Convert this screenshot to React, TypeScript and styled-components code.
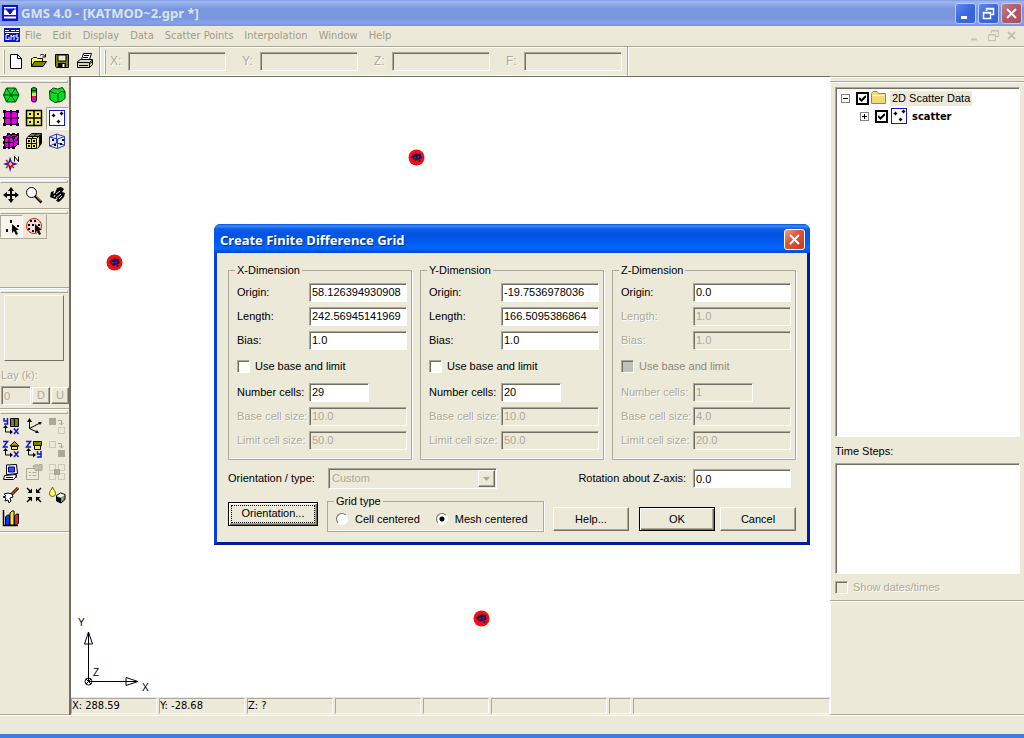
import React from "react";
import styled, { createGlobalStyle, css } from "styled-components";

const face = "#ece9d8";
const shade = "#aca899";
const dark = "#716f64";
const muted = "#aca899";
const sans = `"MS Sans Serif", "Liberation Sans", sans-serif`;
const tahoma = `Tahoma, "DejaVu Sans Condensed", "DejaVu Sans", sans-serif`;

const GlobalStyle = createGlobalStyle`
  *, *::before { box-sizing: border-box; }
  body { margin: 0; background: ${face}; font: 11px/13px ${sans}; color: #000; }
  button, input, select { font: inherit; color: inherit; margin: 0; }
  svg { display: block; flex: none; }
`;

const sunken = css`
  border: 1px solid;
  border-color: ${shade} #fff #fff ${shade};
  box-shadow: inset 1px 1px 0 ${dark};
`;
const raised = css`
  border: 1px solid;
  border-color: #fff ${dark} ${dark} #fff;
  box-shadow: inset -1px -1px 0 ${shade};
`;

const Window = styled.div`
  position: relative;
  display: flex;
  flex-direction: column;
  min-height: 100vh;
`;

/* ---------- title bar ---------- */
const TitleBar = styled.header`
  display: flex;
  align-items: center;
  height: 26px;
  padding: 0 2px;
  gap: 3px;
  background: linear-gradient(#7d9be6 0, #a3b9ee 2px, #8ca6e6 5px, #7a96df 9px, #7a96df 18px, #86a3ea 23px, #7a93dc 100%);
`;
const AppTitle = styled.h1`
  flex: 1;
  margin: 0;
  font: bold 13px/16px "Noto Sans", sans-serif;
  color: #d8e4f8;
`;
const CaptionButton = styled.button<{ $tone: "blue" | "dim" | "red" }>`
  width: 21px;
  height: 21px;
  padding: 0;
  margin-left: ${(p) => (p.$tone === "red" ? 0 : -1)}px;
  display: grid;
  place-items: center;
  border: 1px solid ${(p) => (p.$tone === "red" ? "#fff" : "#b9cbf6")};
  border-radius: 3px;
  background: ${(p) =>
    p.$tone === "red"
      ? "linear-gradient(135deg, #f0a088, #e0573a 40%, #c83a1c)"
      : p.$tone === "dim"
        ? "linear-gradient(135deg, #c07c90, #b05a68 50%, #a85060)"
        : "linear-gradient(135deg, #5f8af0, #3a68e0 50%, #3a60d4)"};
`;

/* ---------- menu bar ---------- */
const MenuBar = styled.nav`
  display: flex;
  align-items: center;
  height: 20px;
  padding: 0 4px 2px;
  gap: 11px;
  font-family: ${tahoma};
`;
const MenuLink = styled.a`
  color: #a09c8c;
  text-decoration: none;
`;
const MenuMark = styled.span`
  margin-right: -6px;
`;
const MdiButtons = styled.div`
  display: flex;
  margin-left: auto;
`;
const MdiButton = styled.button`
  width: 18px;
  height: 16px;
  padding: 0;
  border: 0;
  background: none;
  display: grid;
  place-items: center;
`;

/* ---------- toolbar ---------- */
const ToolBar = styled.div`
  display: flex;
  align-items: center;
  height: 30px;
  border-top: 1px solid ${shade};
  box-shadow: inset 0 1px 0 #fff;
`;
const BarGroup = styled.div<{ $wide?: boolean }>`
  display: flex;
  align-items: center;
  align-self: stretch;
  gap: ${(p) => (p.$wide ? 4 : 0)}px;
  padding: ${(p) => (p.$wide ? "0 5px" : "0 2px 0 4px")};
  border-right: 1px solid ${shade};
  box-shadow: 1px 0 0 #fff, inset 0 -1px 0 #fff;
`;
const Coords = styled.div`
  display: flex;
  gap: 16px;
`;
const Grip = styled.span`
  width: 1px;
  height: 24px;
  background: ${shade};
  box-shadow: -1px 0 0 #fff;
`;
const IconButton = styled.button<{ $pressed?: boolean }>`
  width: 23px;
  height: 23px;
  padding: 0 1px 1px 0;
  display: grid;
  place-items: center;
  background: ${(p) => (p.$pressed ? "#f6f4ec" : "none")};
  border: 1px solid;
  border-color: ${(p) => (p.$pressed ? `${shade} #fff #fff ${shade}` : "transparent")};
`;
const CoordField = styled.label`
  display: flex;
  align-items: center;
  color: ${muted};
  font-size: 12px;
  span { width: 18px; text-shadow: 1px 1px 0 #fff; }
`;

const TextBox = styled.input<{ $w: number }>`
  width: ${(p) => p.$w}px;
  height: 19px;
  padding: 0 2px;
  border-radius: 0;
  background: #fff;
  outline: 0;
  ${sunken}
  &:disabled { background: ${face}; color: ${muted}; }
`;

/* ---------- body ---------- */
const Main = styled.div`
  display: flex;
  flex: 1;
`;
const SideTools = styled.aside`
  width: 69px;
  display: flex;
  flex-direction: column;
  padding-top: 2px;
  border-top: 1px solid ${shade};
  border-bottom: 1px solid ${shade};
  background: ${face};
`;
const ToolGroup = styled.section<{ $tall?: boolean }>`
  padding: 4px 0 1px;
  border-bottom: 1px solid ${shade};
  box-shadow: 0 1px 0 #fff;
  min-height: ${(p) => (p.$tall ? 78 : 0)}px;
  margin-bottom: 1px;
  &::before {
    content: "";
    display: block;
    height: 3px;
    margin: -3px 1px 1px 0;
    border: 1px solid;
    border-color: #fff ${shade} ${shade} #fff;
  }
`;
const IconGrid = styled.div`
  display: grid;
  grid-template-columns: repeat(3, 23px);
`;
const ModePair = styled.div`
  display: flex;
  width: 47px;
  border-right: 1px solid ${shade};
  border-bottom: 1px solid ${shade};
`;
const Preview = styled.div`
  height: 66px;
  margin: 2px 5px 0 4px;
  border: 1px solid;
  border-color: #fff ${dark} ${dark} #fff;
`;
const LayLabel = styled.label`
  display: block;
  margin-top: 8px;
  padding-left: 1px;
  color: ${muted};
  text-shadow: 1px 1px 0 #fff;
`;
const LayRow = styled.div`
  display: flex;
  align-items: center;
  gap: 1px;
  padding: 4px 0 2px 1px;
`;
const MiniButton = styled.button`
  width: 18px;
  height: 17px;
  padding: 0;
  color: ${muted};
  background: ${face};
  ${raised}
`;

const Center = styled.main`
  flex: 1;
  min-width: 0;
  display: flex;
  flex-direction: column;
  border: solid ${dark};
  border-width: 1px 0 0 2px;
`;
const Canvas = styled.div`
  position: relative;
  flex: 1;
  background: #fff;
`;
const Pin = styled.span<{ $x: number; $y: number }>`
  position: absolute;
  left: ${(p) => p.$x}px;
  top: ${(p) => p.$y}px;
`;
const Axes = styled.div`
  position: absolute;
  left: 5px;
  bottom: 0;
`;
const StatusBar = styled.footer`
  display: flex;
  gap: 2px;
  height: 18px;
  padding: 1px 0;
  background: ${face};
  font-family: ${tahoma};
`;
const StatusCell = styled.span<{ $w?: number }>`
  ${(p) => (p.$w ? `width: ${p.$w}px;` : "flex: 1;")}
  line-height: 14px;
  border: 1px solid;
  border-color: ${shade} #fff #fff ${shade};
  white-space: nowrap;
`;

const Explorer = styled.aside`
  width: 194px;
  display: flex;
  flex-direction: column;
  border: solid ${shade};
  border-width: 1px 0;
  box-shadow: inset 1px 1px 0 #fff;
`;
const ExplorerBar = styled.div`
  height: 5px;
  border-bottom: 1px solid ${shade};
  box-shadow: 0 1px 0 #fff;
`;
const ExplorerBody = styled.div`
  padding: 5px 4px 6px 5px;
  border-bottom: 1px solid ${shade};
  box-shadow: 0 1px 0 #fff;
`;
const Well = styled.div<{ $h: number }>`
  height: ${(p) => p.$h}px;
  background: #fff;
  ${sunken}
`;
const Tree = styled.ul`
  margin: 0;
  padding: 1px 0 0 5px;
  list-style: none;
  ul { margin: 0; padding-left: 19px; list-style: none; }
`;
const TreeRow = styled.label<{ $bold?: boolean; $lit?: boolean }>`
  display: flex;
  align-items: center;
  height: 18px;
  gap: 2px;
  font-weight: ${(p) => (p.$bold ? "bold" : "normal")};
  font-family: ${(p) => (p.$bold ? `"DejaVu Sans Condensed", sans-serif` : sans)};
  b, span { padding: 1px 2px; margin-left: ${(p) => (p.$lit ? 1 : 0)}px; background: ${(p) => (p.$lit ? face : "none")}; }
`;
const Check = styled.input<{ $heavy?: boolean }>`
  appearance: none;
  display: block;
  flex: none;
  width: 13px;
  height: 13px;
  background: #fff;
  border-radius: 0;
  ${(p) => (p.$heavy ? "border: 2px solid #000;" : sunken)}
  &:disabled { background: ${face}; }
`;
const TickBox = styled.span`
  && { position: relative; display: block; padding: 0; margin: 0 0 0 4px; background: none; }
  svg { position: absolute; left: 3px; top: 3px; pointer-events: none; }
`;
const WellTitle = styled.label`
  display: block;
  padding: 8px 0 5px;
`;
const ShowDates = styled.label`
  display: flex;
  align-items: center;
  gap: 5px;
  margin-top: 7px;
  color: ${muted};
  text-shadow: 1px 1px 0 #fff;
`;
const BottomStrip = styled.div`
  height: 23px;
  border-bottom: 4px solid #3b7de2;
  box-shadow: inset 0 1px 0 #fff;
`;

/* ---------- dialog ---------- */
const DialogLayer = styled.div`
  position: absolute;
  top: 224px;
  left: 0;
  right: 0;
  display: flex;
  justify-content: center;
`;
const Dialog = styled.section`
  width: 596px;
  border-radius: 7px 7px 0 0;
  border: 3px solid #0a3fd4;
  border-color: #0a50e0 #001c9c #001c9c #0a3fd4;
  border-top: 0;
  background: ${face};
`;
const DialogTitle = styled.header`
  display: flex;
  align-items: center;
  justify-content: space-between;
  height: 29px;
  margin: 0 -3px;
  padding: 2px 5px 0 6px;
  border-radius: 6px 6px 0 0;
  background: linear-gradient(#0a50d0 0, #3c8cf8 2px, #0a5ce8 5px, #0054e3 10px, #005cf0 18px, #0066ff 24px, #0048d0 100%);
  h2 {
    margin: 0;
    font: bold 13px/16px "Noto Sans", sans-serif;
    color: #fff;
    text-shadow: 1px 1px 0 #0a2a80;
  }
`;
const DialogBody = styled.form`
  padding: 11px 11px 10px;
`;
const Columns = styled.div`
  display: grid;
  grid-template-columns: repeat(3, 1fr);
  gap: 8px;
`;
const GroupBox = styled.fieldset`
  min-width: 0;
  margin: 0;
  padding: 3px 4px 7px 8px;
  border: 1px solid ${shade};
  box-shadow: inset 0 -1px 0 #fff, 1px 0 0 #fff;
  legend { margin-left: -2px; padding: 0 2px; line-height: 13px; }
`;
const FieldRow = styled.div<{ $off?: boolean }>`
  display: flex;
  align-items: center;
  height: 24px;
  color: ${(p) => (p.$off ? muted : "#000")};
  text-shadow: ${(p) => (p.$off ? "1px 1px 0 #fff" : "none")};
  label { width: 72px; white-space: nowrap; }
`;
const CheckRow = styled.label<{ $off?: boolean }>`
  display: flex;
  align-items: center;
  height: 28px;
  gap: 5px;
  color: ${(p) => (p.$off ? "#8c8978" : "#000")};
  input:disabled { background: #c0c0c0; }
`;
const OrientRow = styled.div`
  display: flex;
  align-items: center;
  height: 25px;
  margin-top: 6px;
  padding-right: 5px;
`;
const OrientLabel = styled.label`
  width: 100px;
`;
const RotationLabel = styled.label`
  margin: 0 7px 0 auto;
`;
const SelectWrap = styled.div`
  position: relative;
  width: 169px;
  height: 21px;
  color: ${muted};
  ${sunken}
  select {
    appearance: none;
    width: 100%;
    height: 100%;
    padding: 0 3px;
    border: 0;
    background: transparent;
    opacity: 1;
  }
`;
const Arrow = styled.span`
  position: absolute;
  right: 1px;
  top: 1px;
  width: 17px;
  height: 17px;
  display: grid;
  place-items: center;
  background: ${face};
  pointer-events: none;
  ${raised}
`;
const ActionRow = styled.div`
  display: flex;
  align-items: flex-end;
  justify-content: space-between;
  margin-top: 4px;
`;
const PushButton = styled.button<{ $default?: boolean; $w: number }>`
  width: ${(p) => p.$w}px;
  height: 24px;
  padding: 0;
  background: ${face};
  ${raised}
  ${(p) =>
    p.$default &&
    css`
      border-color: #000;
      box-shadow: inset 1px 1px 0 #fff, inset -1px -1px 0 ${dark}, inset -2px -2px 0 ${shade};
    `}
`;
const FocusRing = styled.span`
  display: block;
  margin: 0 2px;
  padding: 1px 0 2px;
  border: 1px dotted #000;
`;
const Lifted = styled.div`
  margin-bottom: 6px;
`;
const GridType = styled(GroupBox)`
  display: flex;
  gap: 16px;
  width: 217px;
  height: 37px;
  padding: 1px 8px 0;
  label { display: flex; align-items: center; gap: 7px; height: 20px; white-space: nowrap; }
`;
const Radio = styled.input`
  appearance: none;
  width: 12px;
  height: 12px;
  border-radius: 50%;
  border: 1px solid;
  border-color: ${dark} #fff #fff ${dark};
  background: #fff;
  &:checked { background: radial-gradient(circle, #000 0 2px, #fff 3px); }
`;
const Buttons = styled.div`
  display: flex;
  padding-bottom: 1px;
  gap: 5px;
  > :first-child { margin-right: 5px; }
`;

/* ---------- icons ---------- */
const Ico = ({ children, w = 18, h = 18 }: { children: React.ReactNode; w?: number; h?: number }) => (
  <svg width={w} height={h} viewBox={`0 0 ${w} ${h}`} fill="none" aria-hidden="true">{children}</svg>
);

const AppMark = () => (
  <Ico w={16} h={16}>
    <rect width="16" height="16" fill="#0a14c8" />
    <path d="M2 2h12v9H2z" fill="#fff" />
    <path d="M2 4h3M11 4h3M4 4h8l-4 5z" fill="#0a14c8" stroke="#0a14c8" />
    <path d="M2 12.500h12" stroke="#fff" strokeWidth="2" />
    <path d="M2 10.500h12" stroke="#0a14c8" />
  </Ico>
);
const DocMark = () => (
  <Ico w={16} h={14}>
    <rect width="16" height="14" fill="#0a14c8" />
    <path d="M1 2.500h4M7 2.500h4M12 2.500h3M1 4.500h14M2 7v5M2 6.500h3M2 11.500h3M5 9v3M7 12V7l1.500 2L10 7v5M14 7h-2v2h2v3h-2" stroke="#fff" />
  </Ico>
);
const NewIcon = () => (
  <Ico><path d="M3.500 2.500h7l4 4v10h-11z" fill="#fff" stroke="#000" /><path d="M10.500 2.500v4h4" stroke="#000" /></Ico>
);
const OpenIcon = () => (
  <Ico>
    <path d="M1.500 14.500v-8h1l1-1h3l1 1h5v3" fill="#ffff60" stroke="#000" />
    <path d="M1.500 14.500l3-5h12l-3.500 5z" fill="#808000" stroke="#000" />
    <path d="M10 3.500c2-2 4-1 5 1M15.500 2v3h-3" stroke="#000" />
  </Ico>
);
const SaveIcon = () => (
  <Ico>
    <path d="M2.500 2.500h13v13h-12l-1-1z" fill="#808000" stroke="#000" />
    <path d="M5 3h8v6H5z" fill="#ece9d8" stroke="#000" />
    <path d="M5 11h8v5H5z" fill="#000" /><path d="M10.500 12v3" stroke="#fff" strokeWidth="2" />
  </Ico>
);
const PrintIcon = () => (
  <Ico>
    <path d="M5.500 7.500l2-6h8l-2 6" fill="#fff" stroke="#000" />
    <path d="M8 3.500h5M7 5.500h5" stroke="#000" />
    <path d="M1.500 9.500l3-2h12v5l-3 3h-12z" fill="#d8d5c4" stroke="#000" />
    <path d="M1.500 10.500h12v5M14 10l2.500-2M3 13.500h9M13 12l3-2" stroke="#000" />
    <path d="M9 12h2" stroke="#e8e000" />
  </Ico>
);
const TinIcon = () => (
  <Ico>
    <path d="M1.500 9l3-7h9l3.500 7-3.500 7h-9z" fill="#00e020" stroke="#043c08" />
    <path d="M1.500 9h15.500M4.500 2l9 14M13.500 2l-9 14" stroke="#043c08" />
  </Ico>
);
const BoreIcon = () => (
  <Ico>
    <path d="M6.500 2.500c0-1 5-1 5 0v12c0 2-5 2-5 0z" fill="#00d020" stroke="#000" />
    <path d="M7 7h4v3H7z" fill="#ffe820" /><path d="M7 10h4v2H7z" fill="#e02020" /><path d="M7 12h4v3H7z" fill="#e000e0" />
    <path d="M7 4c1 1 3 1 4 0" stroke="#000" />
  </Ico>
);
const SolidIcon = () => (
  <Ico>
    <path d="M1.500 5l4-3 4 1 5-1.500 2.500 4v7l-4 3-6 1-5-3z" fill="#00e020" stroke="#043c08" />
    <path d="M1.500 5l4 2 4.500 1 3-2.500 4 .500M10 8v8" stroke="#043c08" />
  </Ico>
);
const MeshIcon = ({ solid }: { solid?: boolean }) => (
  <Ico>
    {solid && <path d="M2.500 5.500l4-3h10v9l-4 4z" fill="#e000e0" stroke="#000" />}
    <path d={solid ? "M2.500 5.500h9v10h-9zM7 5v10M2 10.500h10M7 5l4-3M11.500 5.500l5-3M12 10l4-3" : "M2.500 2.500h13v13h-13zM9 2v14M2 9h14"} fill="#e000e0" stroke="#000" />
    <path
      d={solid ? "M1 4h3v3H1zM10 4h3v3h-3zM1 9h2v3H1zM1 14h3v3H1zM6 14h2v3H6zM10 14h3v3h-3zM5 1h3v2H5zM10 1h3v2h-3zM15 1h2v3h-2zM15 6h2v3h-2zM15 11h2v2h-2z" : "M1 1h3v3H1zM8 1h2v3H8zM14 1h3v3h-3zM1 8h3v2H1zM8 8h2v2H8zM14 8h3v2h-3zM1 14h3v3H1zM8 14h2v3H8zM14 14h3v3h-3z"}
      fill="#200020"
    />
  </Ico>
);
const GridIcon = ({ solid }: { solid?: boolean }) => (
  <Ico>
    {solid && <path d="M1.500 6l5-4.500h10v10l-4 5M3.500 4.500h11v10M5 3h10.500v10M7 6l5-4.500M12 6l4.500-4" fill="#f4ec50" stroke="#000" />}
    <path d={solid ? "M1.500 6.500h10v10h-10zM6.500 6v11M1 11.500h11" : "M1.500 1.500h15v15h-15zM9 1v16M1 9h16"} fill="#f4ec50" stroke="#000" strokeWidth={solid ? 1 : 1.5} />
    <path d={solid ? "M3 8h2v2H3zM8 8h2v2H8zM3 13h2v2H3zM8 13h2v2H8z" : "M4 4h2v2H4zM12 4h2v2h-2zM4 12h2v2H4zM12 12h2v2h-2z"} fill="#000" />
  </Ico>
);
const ScatterIcon = () => (
  <Ico>
    <rect x="1.500" y="1.500" width="15" height="15" fill="#fff" stroke="#1414c8" />
    <path d="M5 5h1v3H5zM4 6h3v1H4zM13 3h1v3h-1zM12 4h3v1h-3zM10 11h1v3h-1zM9 12h3v1H9z" fill="#000" stroke="#000" strokeWidth="0.500" />
  </Ico>
);
const Scatter3Icon = () => (
  <Ico>
    <path d="M1.500 5l7-3 8 2.500v9l-7 3-8-2.500zM1.500 5l8 2v9.500M9.500 7l7-2.500M8.500 2v9l-7 3M8.500 11l8 2" fill="#e4e8fc" stroke="#3038c8" />
    <path d="M4 7h2v2H4zM14 7h2v2h-2zM6 12h2v2H6zM12 11h2v2h-2z" fill="#000" />
  </Ico>
);
const MapIcon = () => (
  <Ico>
    <path d="M8 1.500l2 5.500 6 2-6 2-2 6-1.500-6L1 9l5.500-2z" fill="#2020c8" />
    <path d="M4 5l2 2M4 13l2-2M12 13l-2-2" stroke="#d01818" strokeWidth="1.500" />
    <path d="M8.500 6.500l2.500 2.500-2.500 2.500L6 9z" fill="#ffb060" stroke="#d01818" />
    <path d="M12.500 6.500v-5l4 5v-5" stroke="#000" />
  </Ico>
);
const PanIcon = () => (
  <Ico>
    <path d="M9 3v12M3 9h12" stroke="#000" strokeWidth="2" />
    <path d="M9 1l3 4H6zM9 17l3-4H6zM1 9l4-3v6zM17 9l-4-3v6z" fill="#000" />
  </Ico>
);
const ZoomIcon = () => (
  <Ico>
    <circle cx="6.500" cy="6.500" r="5" fill="#fff" stroke="#000" />
    <path d="M10 10l6.500 6.500" stroke="#000" strokeWidth="2.500" /><path d="M11 10l5 5.500" stroke="#e09030" />
  </Ico>
);
const RotateIcon = () => (
  <Ico>
    <path d="M9 2l4-1 3 2-2 3 3 1-1 4-5 5-3-1 2-3-3 1-5-2 1-5 3-1-1 3 2-1z" fill="#000" />
    <path d="M8 8l4-3M8 12l5-4M6 11l1-2M11 13l3-3" stroke="#ece9d8" />
  </Ico>
);
const Cursor = () => <path d="M10 7v9l2-2 2 4 2-1-2-4h3z" fill="#000" />;
const PickIcon = () => (
  <Ico><path d="M8 3h2v3H8zM15 8h2v2h-2zM4 12h2v3H4z" fill="#000" /><Cursor /></Ico>
);
const PickSetIcon = () => (
  <Ico>
    <circle cx="9" cy="9" r="7.500" fill="#f4dcd4" stroke="#e01818" />
    <path d="M5 3h2v2H5zM9 3h2v2H9zM3 7h2v2H3zM7 7h2v2H7zM3 11h2v2H3zM7 13h2v2H7zM13 7h2v2h-2z" fill="#000" /><Cursor />
  </Ico>
);
const AxisView = ({ kind }: { kind: "xy" | "xz" | "yz" }) => (
  <Ico>
    {kind === "xy" ? <path d="M2 1v3h3M5.500 1v6H2" stroke="#1414d0" strokeWidth="1.500" /> : <path d="M1 1.500h4.500L1.500 7H6" stroke="#1414d0" strokeWidth="1.500" />}
    {kind === "xy" && <><path d="M8.500 1.500h8v8h-8z" fill="#808000" stroke="#000" /><path d="M12.500 1v9" stroke="#000" /></>}
    {kind === "xz" && <><path d="M12.500 1.500L17 6H8z" fill="#c89800" stroke="#000" /><path d="M9.500 6.500h6v3h-6z" fill="#ffe840" stroke="#000" /></>}
    {kind === "yz" && <><path d="M8.500 1.500h8v4h-8z" fill="#808000" stroke="#000" /><path d="M9.500 5.500h6v4h-6z" fill="#ffe840" stroke="#000" /></>}
    <path d="M3.500 10v5H9" stroke="#000" />
    <path d="M3.500 8l2.500 3H1zM11 15l-3-2.500v5z" fill="#000" />
    {kind === "yz" ? <path d="M12.500 11v3H16M16 11v6h-4" stroke="#1414d0" strokeWidth="1.500" /> : <path d="M12 11.500l4.500 5.500M16.500 11.500L12 17" stroke="#1414d0" strokeWidth="1.500" />}
  </Ico>
);
const ObliqueIcon = () => (
  <Ico>
    <path d="M4.500 3v8.500M4.500 11.500L15 6M4.500 11.500L12 15" stroke="#000" />
    <path d="M4.500 1l2.500 4H2zM17 5l-4 0 2 3zM14 16l-4 0 2-3z" fill="#000" />
  </Ico>
);
const dots = (x: number, y: number) => <rect x={x} y={y} width="6" height="6" stroke="#aca899" strokeDasharray="1 1" />;
const HideIcon = ({ flip }: { flip?: boolean }) => (
  <Ico>
    {flip ? <>{dots(1.5, 1.5)}<rect x="10" y="10" width="7" height="7" fill="#aca899" /></> : <><rect x="1" y="1" width="7" height="7" fill="#aca899" />{dots(10.5, 10.5)}</>}
    <path d="M10 3.500h3.500V8M11.500 6l2 2 2-2" stroke="#aca899" />
  </Ico>
);
const IsolateIcon = () => (
  <Ico>{dots(1.5, 1.5)}{dots(10.5, 1.5)}{dots(1.5, 10.5)}{dots(10.5, 10.5)}<rect x="6" y="6" width="6" height="6" fill="#aca899" /></Ico>
);
const DisplayIcon = () => (
  <Ico>
    <path d="M4.500 2l10-.500 1 9-11 1z" fill="#fff" stroke="#000" /><path d="M6.500 4h6v5h-6z" fill="#3050ff" stroke="#0000a0" />
    <path d="M2.500 12.500l12-1v2l-3 3h-10z" fill="#fff" stroke="#000" /><path d="M4 14.500h7M14 12v3" stroke="#000" />
  </Ico>
);
const PropsIcon = () => (
  <Ico>
    <path d="M1.500 5.500h12v11h-12zM4 9.500h2M4 12.500h2M7.500 9.500h4M7.500 12.500h4" stroke="#aca899" />
    <path d="M8 3l3-1.500 3 1v-1h3v6h-3v-1l-3 1.500z" fill="#c4c0b0" stroke="#aca899" />
  </Ico>
);
const BrushIcon = () => (
  <Ico>
    <path d="M10 8l6-6" stroke="#000" strokeWidth="3" /><path d="M10 8l6-6" stroke="#c06010" strokeWidth="1.500" />
    <path d="M2 8l4-1 4 1 1 3-3 1 1 3-2 2-1-3-3 1 1-3-3-1 3-1z" fill="#fff" stroke="#000" />
  </Ico>
);
const FrameIcon = () => (
  <Ico>
    <path d="M2 2l4 4M16 2l-4 4M2 16l4-4M16 16l-4-4" stroke="#000" strokeWidth="1.500" />
    <path d="M7 2.500V7H2.500zM11 2.500V7h4.500zM7 15.500V11H2.500zM11 15.500V11h4.500z" fill="#000" />
  </Ico>
);
const ShadeIcon = () => (
  <Ico>
    <path d="M4.500 1c1 3 3 4 3 6.500a3 3 0 0 1-6 0C1.500 5 3.500 4 4.500 1z" fill="#ffff60" stroke="#606000" />
    <path d="M8.500 9.500l4-2.500 4.500 1.500v5L13 17l-4.500-2z" fill="#909090" stroke="#000" /><path d="M9 10l4 1.500 3.500-2.500-4-1.500z" fill="#fff" /><path d="M13 12v5l-4-2v-4z" fill="#000" />
  </Ico>
);
const ChartIcon = () => (
  <Ico>
    <path d="M1.500 1v15.500H16" stroke="#000" strokeWidth="1.500" />
    <path d="M3.500 8l2-2h2v10h-4z" fill="#1830ff" stroke="#000" />
    <path d="M8 4l2-2h2v14H8z" fill="#ffe820" stroke="#000" />
    <path d="M12.500 7l2-2h2v9l-2 2h-2z" fill="#f02010" stroke="#000" />
  </Ico>
);
const FolderIcon = () => (
  <Ico w={16} h={14}>
    <path d="M.500 12.500v-10l1.500-2h4l1.500 2h7v10z" fill="#f0dc78" stroke="#a08830" />
    <path d="M1.500 4.500h12" stroke="#fffac0" />
  </Ico>
);
const Expander = ({ plus }: { plus?: boolean }) => (
  <Ico w={9} h={9}>
    <rect x=".500" y=".500" width="8" height="8" fill="#fff" stroke="#848484" />
    <path d={plus ? "M2 4.500h5M4.500 2v5" : "M2 4.500h5"} stroke="#000" />
  </Ico>
);
const Tick = () => (
  <Ico w={7} h={7}><path d="M0 3l2.500 2.500L7 1" stroke="#000" strokeWidth="2" /></Ico>
);
const Glyph = ({ kind, color }: { kind: "min" | "restore" | "close"; color: string }) => (
  <Ico w={13} h={13}>
    {kind === "min" && <path d="M2 10.500h6" stroke={color} strokeWidth={color === "#fff" ? 3 : 2} />}
    {kind === "restore" && <path d="M4.500 4V1.500h7v6H9M1.500 5.500h7v6h-7zM4 2h8M1 6h8" stroke={color} strokeWidth={color === "#fff" ? 1.5 : 1} />}
    {kind === "close" && <path d={color === "#fff" ? "M2 2l9 9M11 2l-9 9" : "M3 3l7 7M10 3l-7 7"} stroke={color} strokeWidth="2" />}
  </Ico>
);
const WellMark = () => (
  <Ico w={17} h={17}>
    <circle cx="8.500" cy="8.500" r="8" fill="#f01010" />
    <path d="M3 8l3-3 3-1 4 2 1 3-3 2-4 1z" fill="#501058" />
    <path d="M4 7.500h3M8 5v6M9 6h3v4M12 5l1 1M12 11l-1 2" stroke="#10105c" strokeWidth="1.500" />
    <path d="M6 9l2-1M10 8h1" stroke="#d02020" />
  </Ico>
);

/* ---------- data ---------- */
type Field = [label: string, value: string, off: boolean];
type Dim = { axis: string; top: Field[]; cells: Field[]; locked?: boolean };
const dims: Dim[] = [
  {
    axis: "X",
    top: [["Origin:", "58.126394930908", false], ["Length:", "242.56945141969", false], ["Bias:", "1.0", false]],
    cells: [["Number cells:", "29", false], ["Base cell size:", "10.0", true], ["Limit cell size:", "50.0", true]],
  },
  {
    axis: "Y",
    top: [["Origin:", "-19.7536978036", false], ["Length:", "166.5095386864", false], ["Bias:", "1.0", false]],
    cells: [["Number cells:", "20", false], ["Base cell size:", "10.0", true], ["Limit cell size:", "50.0", true]],
  },
  {
    axis: "Z",
    locked: true,
    top: [["Origin:", "0.0", false], ["Length:", "1.0", true], ["Bias:", "1.0", true]],
    cells: [["Number cells:", "1", true], ["Base cell size:", "4.0", true], ["Limit cell size:", "20.0", true]],
  },
];
const menus = ["File", "Edit", "Display", "Data", "Scatter Points", "Interpolation", "Window", "Help"];
const modules: [string, React.ReactNode][] = [
  ["TIN", <TinIcon />], ["Borehole", <BoreIcon />], ["Solid", <SolidIcon />],
  ["2D mesh", <MeshIcon />], ["2D grid", <GridIcon />], ["2D scatter", <ScatterIcon />],
  ["3D mesh", <MeshIcon solid />], ["3D grid", <GridIcon solid />], ["3D scatter", <Scatter3Icon />],
  ["Map", <MapIcon />],
];
const views: [string, React.ReactNode][] = [
  ["Plan view", <AxisView kind="xy" />], ["Oblique view", <ObliqueIcon />], ["Hide", <HideIcon />],
  ["Front view", <AxisView kind="xz" />], ["Side view", <AxisView kind="yz" />], ["Show", <HideIcon flip />],
  ["Display options", <DisplayIcon />], ["Properties", <PropsIcon />], ["Isolate", <IsolateIcon />],
  ["Refresh", <BrushIcon />], ["Frame", <FrameIcon />], ["Shade", <ShadeIcon />],
  ["Plot", <ChartIcon />],
];
const wells = [[337, 72], [35, 177], [402, 533]];
const statusCells: [string, number?][] = [["X: 288.59", 86], ["Y: -28.68", 86], ["Z: ?", 86], ["", 86], ["", 66], ["", 116], ["", 22], [""]];

const DimField = ({ id, field, narrow }: { id: string; field: Field; narrow?: boolean }) => (
  <FieldRow $off={field[2]}>
    <label htmlFor={id}>{field[0]}</label>
    <TextBox id={id} $w={narrow ? 60 : 98} defaultValue={field[1]} disabled={field[2]} />
  </FieldRow>
);

export default function App() {
  return (
    <Window>
      <GlobalStyle />
      <TitleBar>
        <AppMark />
        <AppTitle>GMS 4.0 - [KATMOD~2.gpr *]</AppTitle>
        <CaptionButton $tone="blue" aria-label="Minimize"><Glyph kind="min" color="#fff" /></CaptionButton>
        <CaptionButton $tone="blue" aria-label="Restore"><Glyph kind="restore" color="#fff" /></CaptionButton>
        <CaptionButton $tone="dim" aria-label="Close"><Glyph kind="close" color="#fff" /></CaptionButton>
      </TitleBar>
      <MenuBar>
        <MenuMark><DocMark /></MenuMark>
        {menus.map((m) => <MenuLink key={m} href="#">{m}</MenuLink>)}
        <MdiButtons>
          <MdiButton aria-label="Minimize document"><Glyph kind="min" color="#c4c0b0" /></MdiButton>
          <MdiButton aria-label="Restore document"><Glyph kind="restore" color="#c4c0b0" /></MdiButton>
          <MdiButton aria-label="Close document"><Glyph kind="close" color="#c4c0b0" /></MdiButton>
        </MdiButtons>
      </MenuBar>
      <ToolBar>
        <BarGroup>
          <Grip />
          <IconButton aria-label="New"><NewIcon /></IconButton>
          <IconButton aria-label="Open"><OpenIcon /></IconButton>
          <IconButton aria-label="Save"><SaveIcon /></IconButton>
          <IconButton aria-label="Print"><PrintIcon /></IconButton>
        </BarGroup>
        <BarGroup $wide>
          <Grip />
          <Coords>
            {["X:", "Y:", "Z:", "F:"].map((c) => (
              <CoordField key={c}><span>{c}</span><TextBox $w={98} disabled /></CoordField>
            ))}
          </Coords>
        </BarGroup>
      </ToolBar>

      <Main>
        <SideTools>
          <ToolGroup>
            <IconGrid>
              {modules.map(([n, icon]) => <IconButton key={n} aria-label={n} $pressed={n === "2D scatter"}>{icon}</IconButton>)}
            </IconGrid>
          </ToolGroup>
          <ToolGroup>
            <IconGrid>
              <IconButton aria-label="Pan"><PanIcon /></IconButton>
              <IconButton aria-label="Zoom"><ZoomIcon /></IconButton>
              <IconButton aria-label="Rotate"><RotateIcon /></IconButton>
            </IconGrid>
          </ToolGroup>
          <ToolGroup $tall>
            <ModePair>
              <IconButton aria-label="Select point" $pressed><PickIcon /></IconButton>
              <IconButton aria-label="Select point set"><PickSetIcon /></IconButton>
            </ModePair>
          </ToolGroup>
          <ToolGroup>
            <Preview />
            <LayLabel htmlFor="lay">Lay (k):</LayLabel>
            <LayRow>
              <TextBox id="lay" $w={30} defaultValue="0" disabled />
              <MiniButton>D</MiniButton>
              <MiniButton>U</MiniButton>
            </LayRow>
          </ToolGroup>
          <ToolGroup>
            <IconGrid>
              {views.map(([n, icon]) => <IconButton key={n} aria-label={n}>{icon}</IconButton>)}
            </IconGrid>
          </ToolGroup>
        </SideTools>

        <Center>
          <Canvas>
            {wells.map(([x, y]) => <Pin key={x} $x={x} $y={y}><WellMark /></Pin>)}
            <Axes>
              <svg width="78" height="80" viewBox="0 0 78 80" fill="none" stroke="#000" fontFamily="Liberation Sans" fontSize="10">
                <path d="M12.500 16v48M12.500 64.500h48M12.500 15l-4 12h8zM62 64.500l-12-4v8z" />
                <circle cx="12.500" cy="64.500" r="3.500" />
                <path d="M10 62l5 5M15 62l-5 5" />
                <g fill="#000" stroke="none"><text x="2" y="9">Y</text><text x="17" y="59">Z</text><text x="66" y="74">X</text></g>
              </svg>
            </Axes>
          </Canvas>
          <StatusBar>
            {statusCells.map(([t, w], i) => <StatusCell key={i} $w={w}>{t}</StatusCell>)}
          </StatusBar>
        </Center>

        <Explorer>
          <ExplorerBar />
          <ExplorerBody>
            <Well $h={350}>
              <Tree>
                <li>
                  <TreeRow $lit>
                    <Expander />
                    <TickBox><Check type="checkbox" $heavy defaultChecked /><Tick /></TickBox>
                    <FolderIcon />
                    <span>2D Scatter Data</span>
                  </TreeRow>
                  <ul>
                    <li>
                      <TreeRow $bold>
                        <Expander plus />
                        <TickBox><Check type="checkbox" $heavy defaultChecked /><Tick /></TickBox>
                        <ScatterIcon />
                        <b>scatter</b>
                      </TreeRow>
                    </li>
                  </ul>
                </li>
              </Tree>
            </Well>
            <WellTitle>Time Steps:</WellTitle>
            <Well $h={111} />
            <ShowDates><Check type="checkbox" disabled />Show dates/times</ShowDates>
          </ExplorerBody>
        </Explorer>
      </Main>
      <BottomStrip />

      <DialogLayer>
        <Dialog role="dialog" aria-labelledby="dlg-title">
          <DialogTitle>
            <h2 id="dlg-title">Create Finite Difference Grid</h2>
            <CaptionButton $tone="red" aria-label="Close dialog"><Glyph kind="close" color="#fff" /></CaptionButton>
          </DialogTitle>
          <DialogBody>
            <Columns>
              {dims.map((d) => (
                <GroupBox key={d.axis}>
                  <legend>{d.axis}-Dimension</legend>
                  {d.top.map((f) => <DimField key={f[0]} id={d.axis + f[0]} field={f} />)}
                  <CheckRow $off={d.locked}><Check type="checkbox" disabled={d.locked} />Use base and limit</CheckRow>
                  {d.cells.map((f, i) => <DimField key={f[0]} id={d.axis + f[0]} field={f} narrow={i === 0} />)}
                </GroupBox>
              ))}
            </Columns>
            <OrientRow>
              <OrientLabel htmlFor="orient">Orientation / type:</OrientLabel>
              <SelectWrap>
                <select id="orient" disabled><option>Custom</option></select>
                <Arrow><Ico w={7} h={4}><path d="M0 0h7L3.500 4z" fill={shade} /></Ico></Arrow>
              </SelectWrap>
              <RotationLabel htmlFor="rotation">Rotation about Z-axis:</RotationLabel>
              <TextBox id="rotation" $w={98} defaultValue="0.0" />
            </OrientRow>
            <ActionRow>
              <Lifted><PushButton type="button" $default $w={90}><FocusRing>Orientation...</FocusRing></PushButton></Lifted>
              <GridType>
                <legend>Grid type</legend>
                <label><Radio type="radio" name="gridtype" />Cell centered</label>
                <label><Radio type="radio" name="gridtype" defaultChecked />Mesh centered</label>
              </GridType>
              <Buttons>
                <PushButton type="button" $w={76}>Help...</PushButton>
                <PushButton type="button" $default $w={76}>OK</PushButton>
                <PushButton type="button" $w={76}>Cancel</PushButton>
              </Buttons>
            </ActionRow>
          </DialogBody>
        </Dialog>
      </DialogLayer>
    </Window>
  );
}
